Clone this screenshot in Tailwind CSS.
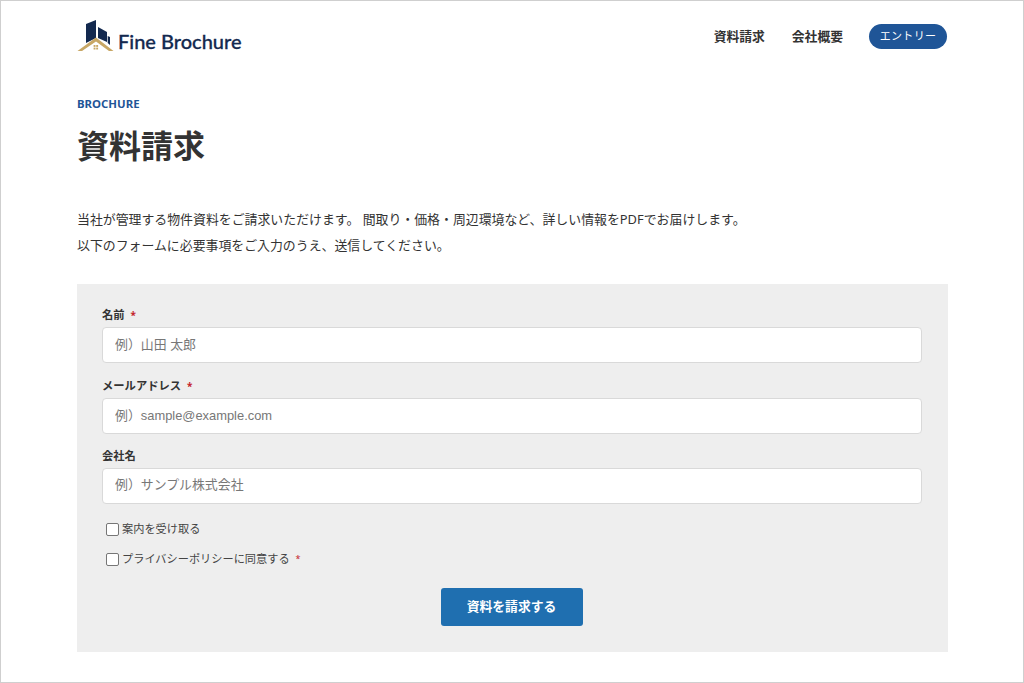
<!DOCTYPE html>
<html lang="ja">
<head>
    <meta charset="UTF-8">
    <meta name="viewport" content="width=device-width, initial-scale=1.0">
    <title>資料請求 - Fine Brochure</title>
    <script src="https://cdn.jsdelivr.net/npm/@tailwindcss/browser@4"></script>
</head>
<body class="bg-white">
    <div class="w-[1024px] h-[683px] overflow-hidden border border-[#cfcfcf] font-['Noto_Sans','Noto_Sans_CJK_JP',sans-serif] text-[#333]">
        <div class="mx-[76px]">
            <!-- Header -->
            <header class="flex items-center justify-between h-[70px] pt-[1px]">
                <div class="flex items-end">
                    <svg class="w-[37px] h-[32px] mb-[1px]" viewBox="0 0 37 32">
                        <path d="M9 4 L19 0 L19 18 L9 23 Z" fill="#13294f"/>
                        <path d="M21 7 L30 12 L30 22 L21 18 Z" fill="#13294f"/>
                        <path d="M30.7 16 L33 17 L33 25 L30.7 23 Z" fill="#13294f"/>
                        <path d="M0.5 31 L19 17.5 L36.5 31 L32 31 L19 21.5 L5 31 Z" fill="#c8a765"/>
                        <rect x="16.6" y="25" width="1.9" height="1.9" fill="#c8a765"/>
                        <rect x="19.2" y="25" width="1.9" height="1.9" fill="#c8a765"/>
                        <rect x="16.6" y="27.6" width="1.9" height="1.9" fill="#c8a765"/>
                        <rect x="19.2" y="27.6" width="1.9" height="1.9" fill="#c8a765"/>
                    </svg>
                    <span class="ml-[4px] text-[20px] leading-[26px] font-medium text-[#13294f] font-['Lato',sans-serif] [-webkit-text-stroke:0.3px_#13294f] -mb-[1px]">Fine Brochure</span>
                </div>
                <nav class="flex items-center gap-[26px]">
                    <a class="mr-[1px] text-[12.8px] font-bold text-[#333]">資料請求</a>
                    <a class="text-[12.8px] font-bold text-[#333]">会社概要</a>
                    <a class="flex items-center justify-center w-[78px] h-[25px] -mt-[1px] rounded-full bg-[#1f5597] text-white text-[11px] tracking-[0.3px]">エントリー</a>
                </nav>
            </header>

            <!-- Title -->
            <p class="mt-[25px] text-[11.4px] leading-[16px] font-bold text-[#1f5597]">BROCHURE</p>
            <h1 class="mt-[12px] text-[32px] leading-[44px] font-bold text-[#333]">資料請求</h1>

            <div class="mt-[38px] text-[12.9px] leading-[26px] text-[#333]">
                <p>当社が管理する物件資料をご請求いただけます。 間取り・価格・周辺環境など、詳しい情報をPDFでお届けします。</p>
                <p>以下のフォームに必要事項をご入力のうえ、送信してください。</p>
            </div>

            <!-- Form -->
            <form class="mt-[26px] bg-[#eeeeee] pl-[25px] pr-[26px] pt-[22px] h-[368px] w-[871px]">
                <div>
                    <label class="flex items-center h-[18px] text-[11.3px] font-bold text-[#333]">名前<span class="ml-[6px] text-[#c4232b] text-[10px]">*</span></label>
                    <input type="text" placeholder="例）山田 太郎" class="mt-[3px] block w-full h-[36px] pl-[12px] pr-[12px] pb-[2px] bg-white border border-[#d9d9d9] rounded-[4px] text-[12.9px] font-['Liberation_Sans','Noto_Sans_CJK_JP',sans-serif] placeholder:text-[#777]">
                </div>
                <div class="mt-[14px]">
                    <label class="flex items-center h-[18px] text-[11.3px] font-bold text-[#333]">メールアドレス<span class="ml-[6px] text-[#c4232b] text-[10px]">*</span></label>
                    <input type="text" placeholder="例）sample@example.com" class="mt-[3px] block w-full h-[36px] pl-[12px] pr-[12px] pb-[2px] bg-white border border-[#d9d9d9] rounded-[4px] text-[12.9px] font-['Liberation_Sans','Noto_Sans_CJK_JP',sans-serif] placeholder:text-[#777]">
                </div>
                <div class="mt-[13px]">
                    <label class="flex items-center h-[18px] text-[11.3px] font-bold text-[#333]">会社名</label>
                    <input type="text" placeholder="例）サンプル株式会社" class="mt-[3px] block w-full h-[36px] pl-[12px] pr-[12px] pb-[3px] bg-white border border-[#d9d9d9] rounded-[4px] text-[12.9px] font-['Liberation_Sans','Noto_Sans_CJK_JP',sans-serif] placeholder:text-[#777]">
                </div>
                <label class="mt-[16px] ml-[4px] flex items-center h-[18px] text-[11.2px] text-[#444]">
                    <span class="w-[13px] h-[13px] mr-[3px] bg-white border border-[#767676] rounded-[2px]"></span>案内を受け取る
                </label>
                <label class="mt-[12px] ml-[4px] flex items-center h-[18px] text-[11.2px] text-[#444]">
                    <span class="w-[13px] h-[13px] mr-[3px] bg-white border border-[#767676] rounded-[2px]"></span>プライバシーポリシーに同意する<span class="ml-[6px] text-[#c4232b] text-[9px]">*</span>
                </label>
                <div class="mt-[20px] flex justify-center pr-[1px]">
                    <button type="button" class="w-[142px] h-[38px] rounded-[3px] bg-[#1f6fb0] text-white text-[12.8px] font-bold">資料を請求する</button>
                </div>
            </form>
        </div>
    </div>
</body>
</html>
